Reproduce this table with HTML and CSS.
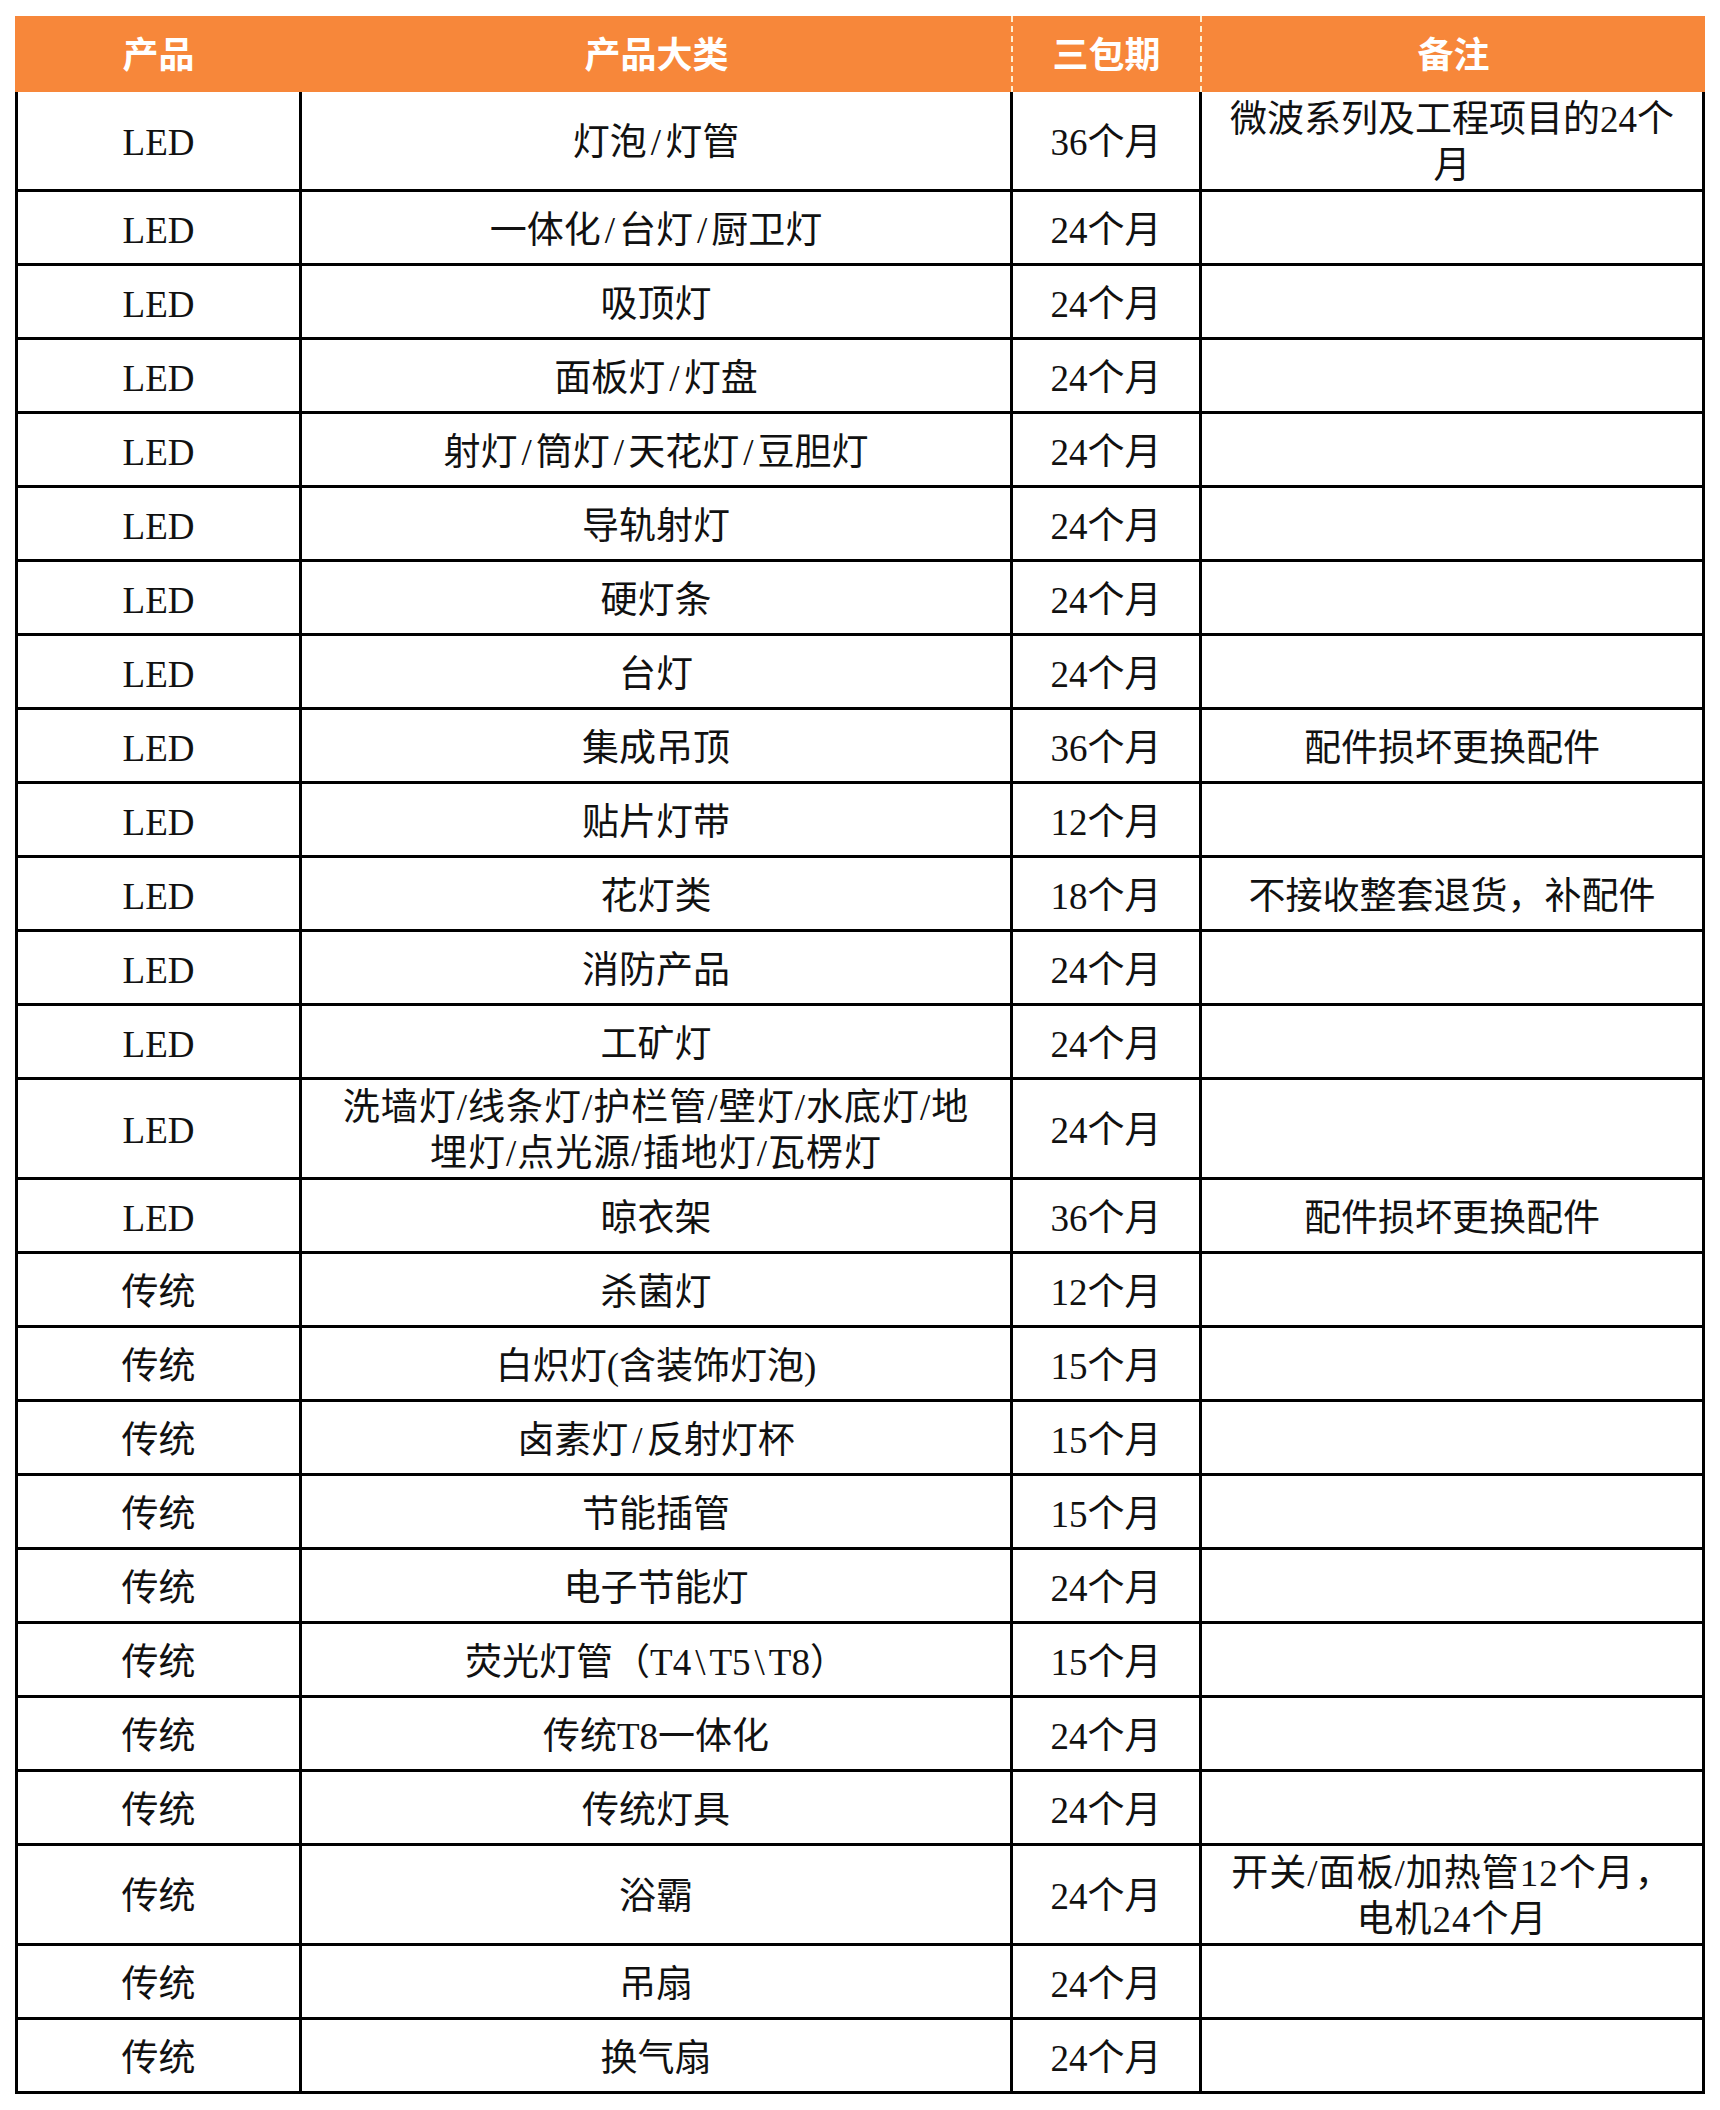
FILE: index.html
```html
<!DOCTYPE html>
<html lang="zh-CN">
<head>
<meta charset="utf-8">
<title>三包期</title>
<link rel="stylesheet" href="styles.css">
</head>
<body>
<table class="warranty">
  <colgroup>
    <col class="c-product">
    <col class="c-category">
    <col class="c-period">
    <col class="c-note">
  </colgroup>
  <thead>
    <tr class="head-row">
      <th>产品</th>
      <th class="dash">产品大类</th>
      <th class="dash">三包期</th>
      <th>备注</th>
    </tr>
  </thead>
  <tbody>
    <tr class="tall"><td>LED</td><td>灯泡<span class="sep">/</span>灯管</td><td>36个月</td><td>微波系列及工程项目的24个月</td></tr>
    <tr><td>LED</td><td>一体化<span class="sep">/</span>台灯<span class="sep">/</span>厨卫灯</td><td>24个月</td><td></td></tr>
    <tr><td>LED</td><td>吸顶灯</td><td>24个月</td><td></td></tr>
    <tr><td>LED</td><td>面板灯<span class="sep">/</span>灯盘</td><td>24个月</td><td></td></tr>
    <tr><td>LED</td><td>射灯<span class="sep">/</span>筒灯<span class="sep">/</span>天花灯<span class="sep">/</span>豆胆灯</td><td>24个月</td><td></td></tr>
    <tr><td>LED</td><td>导轨射灯</td><td>24个月</td><td></td></tr>
    <tr><td>LED</td><td>硬灯条</td><td>24个月</td><td></td></tr>
    <tr><td>LED</td><td>台灯</td><td>24个月</td><td></td></tr>
    <tr><td>LED</td><td>集成吊顶</td><td>36个月</td><td>配件损坏更换配件</td></tr>
    <tr><td>LED</td><td>贴片灯带</td><td>12个月</td><td></td></tr>
    <tr><td>LED</td><td>花灯类</td><td>18个月</td><td>不接收整套退货，补配件</td></tr>
    <tr><td>LED</td><td>消防产品</td><td>24个月</td><td></td></tr>
    <tr><td>LED</td><td>工矿灯</td><td>24个月</td><td></td></tr>
    <tr class="tall"><td>LED</td><td class="wrap-long">洗墙灯/线条灯/护栏管/壁灯/水底灯/地埋灯/点光源/插地灯/瓦楞灯</td><td>24个月</td><td></td></tr>
    <tr><td>LED</td><td>晾衣架</td><td>36个月</td><td>配件损坏更换配件</td></tr>
    <tr><td>传统</td><td>杀菌灯</td><td>12个月</td><td></td></tr>
    <tr><td>传统</td><td>白炽灯(含装饰灯泡)</td><td>15个月</td><td></td></tr>
    <tr><td>传统</td><td>卤素灯<span class="sep">/</span>反射灯杯</td><td>15个月</td><td></td></tr>
    <tr><td>传统</td><td>节能插管</td><td>15个月</td><td></td></tr>
    <tr><td>传统</td><td>电子节能灯</td><td>24个月</td><td></td></tr>
    <tr><td>传统</td><td>荧光灯管（T4<span class="sep">\</span>T5<span class="sep">\</span>T8）</td><td>15个月</td><td></td></tr>
    <tr><td>传统</td><td>传统T8一体化</td><td>24个月</td><td></td></tr>
    <tr><td>传统</td><td>传统灯具</td><td>24个月</td><td></td></tr>
    <tr class="tall"><td>传统</td><td>浴霸</td><td>24个月</td><td class="wrap-note">开关/面板/加热管12个月，电机24个月</td></tr>
    <tr><td>传统</td><td>吊扇</td><td>24个月</td><td></td></tr>
    <tr><td>传统</td><td>换气扇</td><td>24个月</td><td></td></tr>
  </tbody>
</table>
</body>
</html>
```

FILE: styles.css
```css
html, body {
  margin: 0;
  padding: 0;
  background: #ffffff;
}

body {
  padding: 16px 0 0 15px;
}

.warranty {
  border-collapse: separate;
  border-spacing: 0;
  table-layout: fixed;
  width: 1690px;
  font-family: "Liberation Serif", "Noto Sans CJK SC", serif;
  font-size: 37px;
  line-height: 48px;
  color: #111111;
}

.c-product { width: 287px; }
.c-category { width: 711px; }
.c-period { width: 189px; }
.c-note { width: 503px; }

.head-row th {
  height: 76px;
  box-sizing: border-box;
  padding: 0 0 4px 0;
  background: #f7873a;
  color: #ffffff;
  font-family: "Noto Sans CJK SC", "Noto Sans", sans-serif;
  font-weight: 700;
  font-size: 36px;
  line-height: 40px;
  text-align: center;
  vertical-align: middle;
  border: none;
}

.head-row th.dash {
  border-right: 2px dashed rgba(255, 250, 225, 0.9);
}

.warranty td {
  height: 74px;
  box-sizing: border-box;
  padding: 6px 4px 0 4px;
  text-align: center;
  vertical-align: middle;
  border-right: 3px solid #000000;
  border-bottom: 3px solid #000000;
}

.warranty td:first-child {
  border-left: 3px solid #000000;
}

.warranty td:nth-child(2) {
  padding-left: 20px;
  padding-right: 20px;
}

.warranty td:nth-child(4) {
  padding-left: 20px;
  padding-right: 20px;
}

.warranty tr.tall td {
  height: 100px;
  line-height: 46px;
  padding-top: 4px;
}

.warranty td.wrap-long {
  padding-left: 36px;
  padding-right: 36px;
  letter-spacing: 1px;
}

.warranty td.wrap-note {
  letter-spacing: 1px;
}

.sep {
  display: inline-block;
  padding: 0 4px;
}
```
